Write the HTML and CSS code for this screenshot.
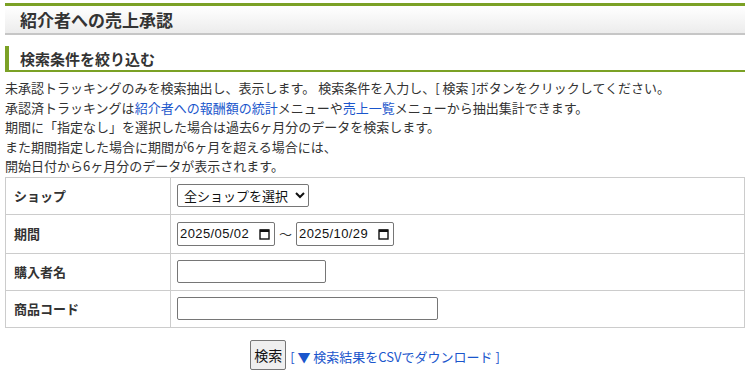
FILE: index.html
```html
<!DOCTYPE html>
<html lang="ja">
<head>
<meta charset="utf-8">
<title>紹介者への売上承認</title>
<link rel="stylesheet" href="styles.css">
</head>
<body>
<div class="page">
  <h1 class="page-title">紹介者への売上承認</h1>
  <h2 class="section-title">検索条件を絞り込む</h2>
  <p class="note">未承認トラッキングのみを検索抽出し、表示します。 検索条件を入力し、[ 検索 ]ボタンをクリックしてください。<br>承認済トラッキングは<a href="#">紹介者への報酬額の統計</a>メニューや<a href="#">売上一覧</a>メニューから抽出集計できます。<br>期間に「指定なし」を選択した場合は過去6ヶ月分のデータを検索します。<br>また期間指定した場合に期間が6ヶ月を超える場合には、<br>開始日付から6ヶ月分のデータが表示されます。</p>
  <table class="search-table">
    <tr class="row-shop">
      <th>ショップ</th>
      <td><select class="shop-select"><option>全ショップを選択</option></select></td>
    </tr>
    <tr class="row-period">
      <th>期間</th>
      <td>
        <div class="period">
          <label class="date-box"><input class="date-input" type="text" value="2025/05/02"><svg class="cal" width="11" height="12" viewBox="0 0 11 12"><rect x="1" y="2" width="9" height="9" fill="none" stroke="#111" stroke-width="1.4"/><rect x="1" y="1.5" width="9" height="2.5" fill="#111"/></svg></label>
          <span class="tilde">～</span>
          <label class="date-box"><input class="date-input" type="text" value="2025/10/29"><svg class="cal" width="11" height="12" viewBox="0 0 11 12"><rect x="1" y="2" width="9" height="9" fill="none" stroke="#111" stroke-width="1.4"/><rect x="1" y="1.5" width="9" height="2.5" fill="#111"/></svg></label>
        </div>
      </td>
    </tr>
    <tr class="row-text">
      <th>購入者名</th>
      <td><input class="text-input name-input" type="text"></td>
    </tr>
    <tr class="row-text">
      <th>商品コード</th>
      <td><input class="text-input code-input" type="text"></td>
    </tr>
  </table>
  <div class="actions">
    <button class="search-btn" type="button">検索</button>
    <a class="csv-link" href="#">[ ▼ 検索結果をCSVでダウンロード ]</a>
  </div>
</div>
</body>
</html>
```
FILE: styles.css
```css
html, body {
  margin: 0;
  padding: 0;
  background: #fff;
}
body {
  font-family: "Noto Sans CJK JP", "Noto Sans", sans-serif;
  font-size: 13px;
  color: #333;
}
.page {
  margin: 3px 6px 0 5px;
}
.page-title {
  margin: 0;
  height: 27px;
  border-top: 3px solid #7ba125;
  border-bottom: 2px solid #c6c6c6;
  background: linear-gradient(#ffffff, #ececec);
  font-size: 17px;
  font-weight: bold;
  line-height: 28px;
  padding-left: 15px;
  color: #333;
}
.section-title {
  margin: 11px 0 0;
  height: 24px;
  border-left: 4px solid #7ba125;
  border-bottom: 2px solid #7ba125;
  font-size: 15px;
  font-weight: bold;
  line-height: 25px;
  padding-left: 11px;
  color: #333;
}
.note {
  margin: 6px 0 1px;
  line-height: 19.5px;
}
.note a {
  color: #1a56cc;
  text-decoration: none;
}
.search-table {
  width: 100%;
  border-collapse: collapse;
  border: 1px solid #cccccc;
}
.search-table th,
.search-table td {
  border: 1px solid #cccccc;
  padding: 0 6px;
  text-align: left;
  vertical-align: middle;
}
.search-table th {
  width: 150px;
  font-weight: bold;
  padding-left: 8px;
}
.row-shop th, .row-shop td { height: 36px; }
.row-period th, .row-period td { height: 38px; }
.row-text th, .row-text td { height: 36px; }
.shop-select {
  font-family: "Noto Sans CJK JP", "Noto Sans", sans-serif;
  font-size: 13px;
  width: 132px;
  height: 23px;
  color: #111;
  border: 1px solid #767676;
  border-radius: 2px;
  background: #fff;
  padding: 0 2px;
}
.period {
  display: flex;
  align-items: center;
  gap: 3px;
}
.date-box {
  display: flex;
  align-items: center;
  width: 96px;
  height: 22px;
  border: 1px solid #767676;
  border-radius: 2px;
  background: #fff;
}
.date-input {
  width: 74px;
  border: 0;
  padding: 0 0 0 2px;
  margin: 0;
  font-family: "Liberation Sans", "Noto Sans", sans-serif;
  font-size: 13px;
  letter-spacing: 0.4px;
  color: #111;
  outline: none;
  background: transparent;
}
.cal {
  margin-left: 5px;
}
.tilde {
  font-size: 13px;
  color: #333;
  margin: 0 1px;
}
.text-input {
  height: 23px;
  box-sizing: border-box;
  border: 1px solid #767676;
  border-radius: 2px;
  padding: 0 3px;
  font-size: 13px;
}
.name-input { width: 149px; }
.code-input { width: 261px; }
.actions {
  display: flex;
  justify-content: center;
  align-items: center;
  gap: 4px;
  margin-top: 12px;
}
.search-btn {
  height: 30px;
  padding: 0 3px;
  font-family: "Noto Sans CJK JP", sans-serif;
  font-size: 14px;
  color: #111;
  background: #efefef;
  border: 1px solid #767676;
  border-radius: 2px;
}
.csv-link {
  color: #1a56cc;
  text-decoration: none;
  font-size: 13px;
  margin-top: 4px;
}
```
